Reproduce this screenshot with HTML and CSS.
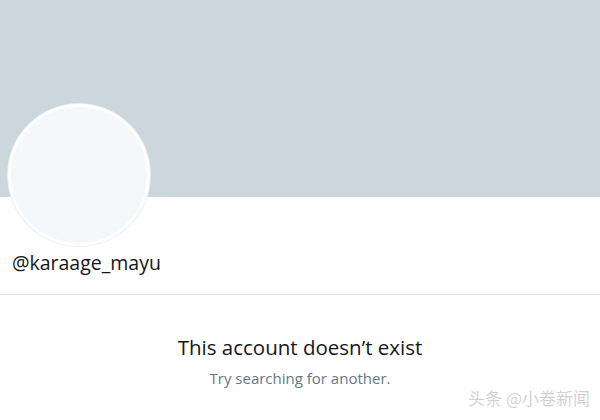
FILE: index.html
```html
<!DOCTYPE html>
<html lang="en">
<head>
<meta charset="utf-8">
<link rel="stylesheet" href="styles.css">
</head>
<body>
<div class="page">
  <div class="banner"></div>
  <div class="profile">
    <div class="avatar"></div>
    <div class="handle">@karaage_mayu</div>
  </div>
  <div class="empty">
    <div class="empty-title">This account doesn’t exist</div>
    <div class="empty-sub">Try searching for another.</div>
  </div>
  <div class="watermark">头条 @小卷新闻</div>
</div>
</body>
</html>
```
FILE: styles.css
```css
html, body {
  margin: 0;
  padding: 0;
  background: #ffffff;
}
.page {
  position: relative;
  width: 600px;
  height: 420px;
  overflow: hidden;
  font-family: "Open Sans", "Noto Sans", sans-serif;
  color: #14171a;
}
.banner {
  height: 197px;
  background: #ccd6dd;
}
.profile {
  display: flex;
  flex-direction: column;
  align-items: flex-start;
  padding: 0 12px;
  border-bottom: 1px solid #e1e6ea;
  height: 98px;
  box-sizing: border-box;
}
.avatar {
  flex: none;
  width: 136px;
  height: 136px;
  margin-top: -93px;
  margin-left: -4px;
  border-radius: 50%;
  background: #f5f8fa;
  border: 3px solid #ffffff;
  box-shadow: 0 0 0 1px #e6ecf0;
}
.handle {
  margin-top: 4px;
  font-size: 19.5px;
  line-height: 26px;
  color: #14171a;
}
.empty {
  display: flex;
  flex-direction: column;
  align-items: center;
  padding-top: 38px;
}
.empty-title {
  font-size: 20.5px;
  line-height: 28px;
  color: #14171a;
}
.empty-sub {
  margin-top: 7px;
  font-size: 15px;
  line-height: 20px;
  color: #657786;
}
.watermark {
  position: absolute;
  right: 10px;
  bottom: 10px;
  font-family: "Noto Sans CJK SC", sans-serif;
  font-size: 17px;
  color: rgba(120, 120, 120, 0.35);
}
```
